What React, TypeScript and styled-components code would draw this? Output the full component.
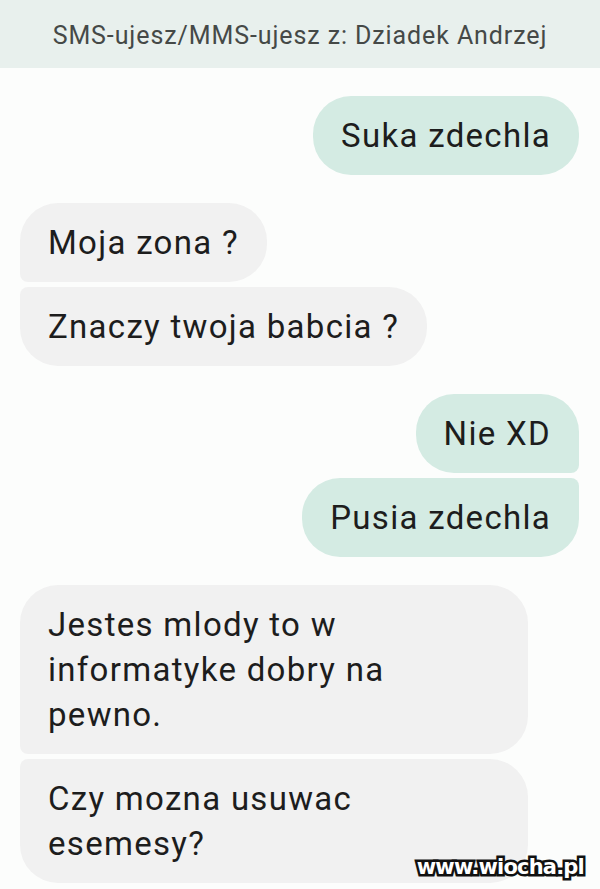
import React from "react";
import styled, { createGlobalStyle, css } from "styled-components";

const Global = createGlobalStyle`
  html, body { margin: 0; padding: 0; background: #fcfdfc; }
  body { font-family: Roboto, "Noto Sans", "Liberation Sans", sans-serif; overflow: hidden; }
  * { box-sizing: border-box; }
`;

const Screen = styled.div`
  position: relative;
  width: 600px;
  height: 889px;
  overflow: hidden;
  background: #fcfdfc;
  display: flex;
  flex-direction: column;
`;

const Header = styled.header`
  height: 68px;
  background: #e8f0ed;
  display: flex;
  align-items: center;
  justify-content: center;
  color: #454947;
  font-size: 25px;
  letter-spacing: 0.9px;
  padding-top: 2px;
`;

const Thread = styled.main`
  display: flex;
  flex-direction: column;
  gap: 28px;
  padding: 28px 21px 0 20px;
`;

const Group = styled.div<{ $out?: boolean }>`
  display: flex;
  flex-direction: column;
  gap: 5px;
  align-items: ${(p) => (p.$out ? "flex-end" : "flex-start")};
`;

type Pos = "single" | "first" | "middle" | "last";

const R = 38;
const r = 8;

const Bubble = styled.div<{ $out?: boolean; $pos: Pos; $wide?: boolean }>`
  background: ${(p) => (p.$out ? "#d4ebe3" : "#f1f1f1")};
  color: #1d1d1d;
  font-size: 33px;
  line-height: 45px;
  letter-spacing: 1.3px;
  padding: 17px 28px;
  width: ${(p) => (p.$wide ? "508px" : "auto")};
  ${(p) => {
    const top = p.$pos === "single" || p.$pos === "first" ? R : r;
    const bottom = p.$pos === "single" || p.$pos === "last" ? R : r;
    return p.$out
      ? css`border-radius: ${R}px ${top}px ${bottom}px ${R}px;`
      : css`border-radius: ${top}px ${R}px ${R}px ${bottom}px;`;
  }}
`;

const Watermark = styled.div`
  position: absolute;
  right: 16px;
  bottom: 10px;
  font-family: "DejaVu Sans", "Liberation Sans", sans-serif;
  font-weight: bold;
  font-size: 21px;
  letter-spacing: -0.8px;
  color: #ffffff;
  -webkit-text-stroke: 5px #111;
  paint-order: stroke fill;
`;

export default function App() {
  return (
    <>
      <Global />
      <Screen>
        <Header>SMS-ujesz/MMS-ujesz z: Dziadek Andrzej</Header>
        <Thread>
          <Group $out>
            <Bubble $out $pos="single">Suka zdechla</Bubble>
          </Group>
          <Group>
            <Bubble $pos="first">Moja zona ?</Bubble>
            <Bubble $pos="last">Znaczy twoja babcia ?</Bubble>
          </Group>
          <Group $out>
            <Bubble $out $pos="first">Nie XD</Bubble>
            <Bubble $out $pos="last">Pusia zdechla</Bubble>
          </Group>
          <Group>
            <Bubble $pos="first" $wide>
              Jestes mlody to w<br />
              informatyke dobry na<br />
              pewno.
            </Bubble>
            <Bubble $pos="last" $wide>
              Czy mozna usuwac<br />
              esemesy?
            </Bubble>
          </Group>
        </Thread>
        <Watermark>www.wiocha.pl</Watermark>
      </Screen>
    </>
  );
}
